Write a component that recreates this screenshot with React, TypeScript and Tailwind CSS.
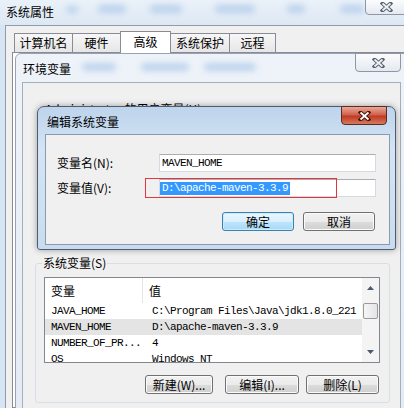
import React from "react";

const btn =
  "flex h-[19px] items-center justify-center rounded-[3px] border border-[#707070] bg-[linear-gradient(#f2f2f2,#ebebeb_50%,#dddddd_50%,#cfcfcf)] shadow-[inset_0_0_0_1px_#fbfbfb] leading-none";

const tabs = [
  { label: "计算机名", w: "w-[59px]" },
  { label: "硬件", w: "w-[49px]" },
  { label: "高级", w: "w-[51px]", active: true },
  { label: "系统保护", w: "w-[60px]" },
  { label: "远程", w: "w-[47px]" },
];

const rows = [
  { name: "JAVA_HOME", value: "C:\\Program Files\\Java\\jdk1.8.0_221" },
  { name: "MAVEN_HOME", value: "D:\\apache-maven-3.3.9", selected: true },
  { name: "NUMBER_OF_PR...", value: "4" },
  { name: "OS", value: "Windows_NT" },
];

function CloseGlyph({ red }: { red?: boolean }) {
  const d = "M2.5 1.5 L10.5 8.5 M10.5 1.5 L2.5 8.5";
  return (
    <svg width="13" height="10" viewBox="0 0 13 10">
      <path d={d} stroke={red ? "#43140c" : "#56606e"} strokeWidth="3.8" strokeLinecap="square" fill="none" />
      <path d={d} stroke={red ? "#ffffff" : "#eef1f5"} strokeWidth="1.8" fill="none" />
    </svg>
  );
}

function Blob({ className }: { className: string }) {
  return <span className={"absolute rounded-full bg-[#a9c6e8] opacity-70 blur-[3px] " + className} />;
}

export default function App() {
  return (
    <div className="relative h-[408px] w-[404px] overflow-hidden bg-[#d6e4f3] font-['Noto_Sans_CJK_SC',sans-serif] text-[12px] text-black">
      {/* 系统属性 */}
      <div className="absolute inset-0 flex flex-col">
        <div className="relative h-[25px] shrink-0 bg-[linear-gradient(#eaf1f9,#dde8f4)]">
          <Blob className="left-[66px] top-[6px] h-[7px] w-[12px]" />
          <Blob className="left-[98px] top-[5px] h-[8px] w-[28px]" />
          <Blob className="left-[150px] top-[5px] h-[8px] w-[32px]" />
          <Blob className="left-[215px] top-[5px] h-[8px] w-[40px]" />
          <Blob className="left-[287px] top-[5px] h-[8px] w-[18px]" />
          <Blob className="left-[340px] top-[5px] h-[8px] w-[24px]" />
          <span className="absolute left-[6px] top-[4px] leading-[16px]">系统属性</span>
          <div className="absolute right-[-3px] top-[-1px] flex h-[16px] w-[42px] items-center justify-center rounded-bl-[4px] border border-[#8d97a5] bg-[linear-gradient(#fbfcfd,#e5eaf0)]">
            <CloseGlyph />
          </div>
        </div>
        <div className="ml-[5px] flex flex-1 flex-col border-l border-t border-[#8f9caa] bg-[#f0f0f0] pl-[6px] pt-[5px]">
          <div className="relative z-10 flex items-end pl-[2px]">
            {tabs.map((t) =>
              t.active ? (
                <div
                  key={t.label}
                  className={t.w + " -ml-px mb-[-1px] flex h-[22px] items-start justify-center border border-b-0 border-[#898c95] bg-white pt-[3px] leading-[14px]"}
                >
                  {t.label}
                </div>
              ) : (
                <div
                  key={t.label}
                  className={t.w + " -ml-px flex h-[19px] items-center justify-center border border-b-0 border-[#898c95] bg-[linear-gradient(#f7f7f7,#e6e6e6)] leading-[14px] first:ml-0"}
                >
                  {t.label}
                </div>
              )
            )}
          </div>
          <div className="mr-[-2px] flex-1 border border-[#898c95] bg-white" />
        </div>
      </div>

      {/* 环境变量 */}
      <div className="absolute left-[15px] top-[53px] flex h-[360px] w-[392px] flex-col rounded-tl-[6px] border border-[#97a3b2] bg-[linear-gradient(#eef3f9,#e4ebf4)]">
        <div className="relative h-[28px] shrink-0">
          <Blob className="left-[66px] top-[9px] h-[8px] w-[34px]" />
          <Blob className="left-[125px] top-[9px] h-[8px] w-[48px]" />
          <Blob className="left-[188px] top-[9px] h-[8px] w-[52px]" />
          <span className="absolute left-[7px] top-[7px] leading-[16px]">环境变量</span>
          <div className="absolute left-[339px] top-[-1px] flex h-[19px] w-[46px] items-center justify-center rounded-b-[4px] border border-[#8d97a5] bg-[linear-gradient(#fbfcfd,#e4e9ef)]">
            <CloseGlyph />
          </div>
        </div>
        <div className="mr-[5px] ml-[6px] flex flex-1 flex-col border border-[#a3afbd] bg-[#f0f0f0]">
          <div className="pl-[22px] pt-[19px] leading-[14px]">Administrator 的用户变量(U)</div>
          <fieldset className="mr-[10px] ml-[12px] mt-[140px] rounded-[3px] border border-[#d5dfe5] pb-[8px] pl-[8px]">
            <legend className="ml-[-2px] px-[1px] leading-[14px]">系统变量(S)</legend>
            <div className="mt-[7px] flex h-[86px] w-[336px] border border-[#828790] bg-white">
              <div className="flex flex-1 flex-col overflow-hidden">
                <div className="flex h-[25px] shrink-0 items-center">
                  <div className="flex h-full w-[98px] items-center border-r border-[#e5e5e5] pl-[6px]">变量</div>
                  <div className="pl-[6px]">值</div>
                </div>
                {rows.map((r) => (
                  <div
                    key={r.name}
                    className={
                      (r.selected ? "bg-[#e4e4e4] " : "") +
                      "flex h-[16px] shrink-0 items-center font-['Liberation_Mono',monospace] text-[11px] leading-[16px] tracking-[-0.6px]"
                    }
                  >
                    <div className="w-[98px] pl-[6px] whitespace-nowrap">{r.name}</div>
                    <div className="pl-[9px] whitespace-nowrap">{r.value}</div>
                  </div>
                ))}
              </div>
              <div className="flex w-[17px] flex-col items-center bg-[#f4f4f4]">
                <svg width="7" height="4" viewBox="0 0 7 4" className="mt-[8px]">
                  <path d="M0 4 L3.5 0 L7 4 Z" fill="#4d5a6a" />
                </svg>
                <div className="mt-[13px] h-[16px] w-[15px] rounded-[2px] border border-[#9a9a9a] bg-[linear-gradient(90deg,#f6f6f6,#e4e4e4)]" />
                <svg width="7" height="4" viewBox="0 0 7 4" className="mt-auto mb-[8px]">
                  <path d="M0 0 L3.5 4 L7 0 Z" fill="#4d5a6a" />
                </svg>
              </div>
            </div>
            <div className="mt-[12px] flex w-[336px] justify-end pr-[1px]">
              <div className={btn + " mr-[12px] w-[68px]"}>新建(W)...</div>
              <div className={btn + " mr-[7px] w-[74px]"}>编辑(I)...</div>
              <div className={btn + " w-[73px]"}>删除(L)</div>
            </div>
          </fieldset>
        </div>
      </div>

      {/* 编辑系统变量 */}
      <div className="absolute left-[37px] top-[106px] flex h-[144px] w-[359px] flex-col rounded-t-[7px] rounded-b-[3px] border border-[#4d5e73] bg-[linear-gradient(#bdd4ec,#d4e4f4_30%,#c9dcef)] shadow-[0_0_6px_rgba(0,0,0,0.35)]">
        <div className="relative h-[27px] shrink-0">
          <span className="absolute left-[9px] top-[7px] leading-[16px]">编辑系统变量</span>
          <div className="absolute left-[303px] top-[-1px] flex h-[19px] w-[46px] items-center justify-center rounded-b-[4px] border border-[#5c2a22] bg-[linear-gradient(#e9a899,#d0624c_45%,#c23a21_55%,#d47a62)]">
            <CloseGlyph red />
          </div>
        </div>
        <div className="relative mr-[5px] ml-[7px] h-[111px] border border-[#8a9bb0] bg-[#f0f0f0]">
          <div className="mt-[19px] flex h-[18px] items-center">
            <div className="w-[113px] pl-[11px] leading-[14px]">变量名(N):</div>
            <div className="flex h-[18px] w-[217px] items-center border border-[#d5dae2] border-t-[#abadb3] bg-white pl-[2px] font-['Liberation_Mono',monospace] text-[11px] tracking-[-0.6px]">
              MAVEN_HOME
            </div>
          </div>
          <div className="mt-[7px] flex h-[18px] items-center">
            <div className="w-[113px] pl-[11px] leading-[14px]">变量值(V):</div>
            <div className="flex h-[18px] w-[217px] items-center border border-[#d5dae2] border-t-[#abadb3] bg-white font-['Liberation_Mono',monospace] text-[11px] tracking-[-0.6px]">
              <span className="h-[13px] bg-[#3399ff] px-[2px] leading-[13px] text-white">D:\apache-maven-3.3.9</span>
            </div>
          </div>
          <div className="absolute left-[99px] top-[43px] h-[20px] w-[192px] border border-[#e3363c]" />
          <div className="mt-[15px] flex justify-end gap-[9px] pr-[14px]">
            <div className="flex h-[19px] w-[72px] items-center justify-center rounded-[3px] border border-[#3c7fb1] bg-[linear-gradient(#eaf6fd,#d9f0fc_50%,#bee6fd_50%,#a7d9f5)] shadow-[inset_0_0_0_1px_#c9ecfb] leading-none">
              确定
            </div>
            <div className={btn + " w-[72px]"}>取消</div>
          </div>
        </div>
      </div>
    </div>
  );
}
